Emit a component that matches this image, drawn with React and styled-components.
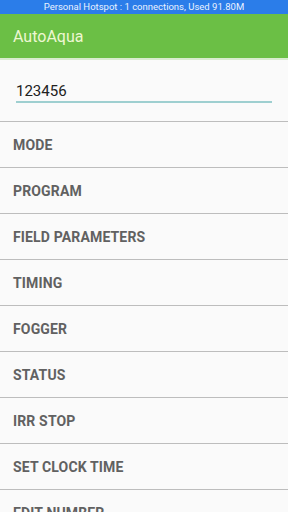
import React from "react";
import styled, { createGlobalStyle } from "styled-components";

const Global = createGlobalStyle`
  html, body { margin: 0; padding: 0; background: #fafafa; }
  body { font-family: Roboto, "Noto Sans", sans-serif; width: 288px; height: 512px; overflow: hidden; }
`;

const Screen = styled.div`
  display: flex;
  flex-direction: column;
  width: 288px;
  height: 512px;
  overflow: hidden;
  background: #fafafa;
  & > * { flex-shrink: 0; }
`;

const StatusBar = styled.div`
  height: 14px;
  background: #2b7de9;
  color: #eaf2ff;
  font-size: 9.5px;
  line-height: 14px;
  text-align: center;
  white-space: nowrap;
`;

const AppBar = styled.div`
  height: 44px;
  background: #6bbf45;
  display: flex;
  align-items: center;
  padding-left: 13px;
  color: #eef7d2;
  font-size: 16px;
  border-bottom: 2px solid #d9eccf;
`;

const InputArea = styled.div`
  height: 61px;
  padding: 0 16px;
  display: flex;
  flex-direction: column;
`;

const Field = styled.div`
  margin-top: 21px;
  height: 20px;
  font-size: 15px;
  line-height: 20px;
  color: #212121;
  border-bottom: 2px solid #9ecfd0;
`;

const Row = styled.div`
  height: 45px;
  border-top: 1px solid #bdbdbd;
  display: flex;
  align-items: center;
  padding-left: 13px;
  color: #616161;
  font-size: 14px;
  font-weight: 700;
  letter-spacing: 0.15px;
  white-space: nowrap;
`;

const items = [
  "MODE",
  "PROGRAM",
  "FIELD PARAMETERS",
  "TIMING",
  "FOGGER",
  "STATUS",
  "IRR STOP",
  "SET CLOCK TIME",
  "EDIT NUMBER",
];

export default function App() {
  return (
    <>
      <Global />
      <Screen>
        <StatusBar>Personal Hotspot : 1 connections, Used 91.80M</StatusBar>
        <AppBar>AutoAqua</AppBar>
        <InputArea>
          <Field>123456</Field>
        </InputArea>
        {items.map((t) => (
          <Row key={t}>{t}</Row>
        ))}
      </Screen>
    </>
  );
}
